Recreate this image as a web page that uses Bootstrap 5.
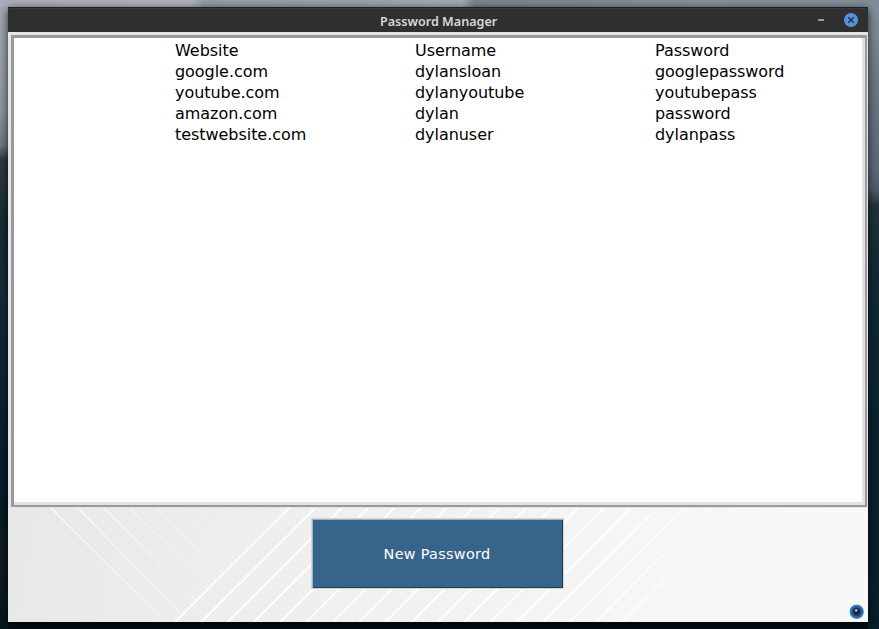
<!DOCTYPE html>
<html lang="en">
<head>
<meta charset="utf-8">
<meta name="viewport" content="width=device-width, initial-scale=1">
<title>Password Manager</title>
<link href="https://cdn.jsdelivr.net/npm/bootstrap@5.3.0/dist/css/bootstrap.min.css" rel="stylesheet">
<style>
body{height:629px;padding:7px 11px 7px 8px;font-family:"DejaVu Sans",sans-serif;color:#000;
 background:linear-gradient(to right,#a9adba 0,#b0b3c0 190px,#939ca7 205px,#9a9fac 350px,#a5aab7 462px,#76858e 475px,#84909b 700px,#7f8c97 100%) top/100% 7px no-repeat,
 linear-gradient(#a5a9b5 0,#9195a2 110px,#6f7a82 145px,#2b3c42 160px,#172b34 220px,#132a37 300px,#0b2030 420px,#081b28 500px,#0c1e20 560px,#07151d 629px) left/8px 100% no-repeat,
 linear-gradient(#84919c 0,#6c7984 80px,#596878 170px,#4e5c68 190px,#223438 205px,#142b35 260px,#0d2531 350px,#081e29 629px) right/11px 100% no-repeat,
 #030d13}
.app-window{box-shadow:0 2px 8px rgba(0,0,0,.75);border-radius:2px 2px 0 0}
.title-bar{height:25px;background:#2f2f2f;border-top:1px solid #1f1f1f;border-radius:2px 2px 0 0;box-shadow:inset 0 1px #3a3a3a;padding-right:10px}
.title-text{left:372px;top:5px;font:600 12.6px/17px "Noto Sans",sans-serif;color:#d8d8d8}
.min-mark{width:6px;height:2px;background:#9a9a9a;margin-right:20px}
.list-rim{height:476px;border:solid #e5e5e5;border-width:3px 1px 1px 3px}
.list-frame{border:solid #9a9a9a;border-width:3px 2px 2px 3px}
.list-area{border:solid #e2e2e2;border-width:0 3px 3px 0;padding:2px 0 0 161px}
.entry{display:grid;grid-template-columns:repeat(3,240px);width:680px;font-size:16px;line-height:21px;letter-spacing:-.05px;white-space:nowrap}
.entry span{width:0}
.footer-area{height:114px;background:linear-gradient(100deg,#e8e8e8,#efefef 35%,#f7f7f7 80%,#f8f8f8);padding-top:10px}
.new-btn{width:253px;height:71px;margin-right:2px;border-radius:0;background:#37648b!important;border:1px solid #d3d6d8!important;color:#fff!important;font-size:14.4px;letter-spacing:.3px;padding:2px 0 0;box-shadow:inset 1px 1px #9eb2c3,inset -1px -1px #1d3d59}
</style>
<script src="https://cdn.jsdelivr.net/npm/bootstrap@5.3.0/dist/js/bootstrap.bundle.min.js" defer></script>
</head>
<body class="m-0 overflow-hidden">
<main class="app-window h-100 d-flex flex-column">
 <header class="title-bar d-flex align-items-center justify-content-end position-relative flex-shrink-0">
  <div class="title-text position-absolute text-nowrap">Password Manager</div>
  <span class="min-mark"></span>
  <svg width="14" height="14" viewBox="0 0 14 14"><circle cx="7" cy="7" r="7" fill="#5294e2"/><path d="M4.2 4.2l5.6 5.6m0-5.6l-5.6 5.6" stroke="#2f343f" stroke-width="1.6"/></svg>
 </header>
 <section class="list-rim d-flex flex-shrink-0">
  <div class="list-frame d-flex flex-fill">
   <div class="list-area flex-fill bg-white">
    <div class="entry"><span>Website</span><span>Username</span><span>Password</span></div>
    <div class="entry"><span>google.com</span><span>dylansloan</span><span>googlepassword</span></div>
    <div class="entry"><span>youtube.com</span><span>dylanyoutube</span><span>youtubepass</span></div>
    <div class="entry"><span>amazon.com</span><span>dylan</span><span>password</span></div>
    <div class="entry"><span>testwebsite.com</span><span>dylanuser</span><span>dylanpass</span></div>
   </div>
  </div>
 </section>
 <footer class="footer-area position-relative d-flex justify-content-center align-items-start flex-shrink-0">
  <svg class="position-absolute top-0 start-0" width="860" height="114" viewBox="0 0 860 114">
   <defs>
    <linearGradient id="fadeDown" gradientUnits="userSpaceOnUse" x1="40" y1="0" x2="260" y2="0"><stop stop-color="#fff" stop-opacity=".75"/><stop offset=".5" stop-color="#fff" stop-opacity=".32"/><stop offset="1" stop-color="#fff" stop-opacity=".1"/></linearGradient>
    <linearGradient id="fadeRight" gradientUnits="userSpaceOnUse" x1="160" y1="0" x2="730" y2="0"><stop stop-color="#fff"/><stop offset=".7" stop-color="#fff" stop-opacity=".9"/><stop offset="1" stop-color="#fff" stop-opacity=".3"/></linearGradient>
    <radialGradient id="orb"><stop stop-color="#0e1a26"/><stop offset=".4" stop-color="#1b3047"/><stop offset=".7" stop-color="#2764a8"/><stop offset=".9" stop-color="#4182c8"/><stop offset="1" stop-color="#b5d0ec"/></radialGradient>
   </defs>
   <path fill="none" stroke="url(#fadeDown)" stroke-width="1.6" d="M43 0L157 114M70 0L173 106M96 0L188 92M122 0L202 79M149 0L215 66M175 0L228 53M202 0L242 40M228 0L255 27M254 0L268 14"/>
   <path fill="none" stroke="url(#fadeRight)" stroke-width="1.9" d="M281 0L167 114M307.3 0l-114 114M333.6 0l-114 114M359.9 0l-114 114M386.2 0l-114 114M412.5 0l-114 114M438.8 0l-114 114M465.1 0l-114 114M491.4 0l-114 114M517.7 0l-114 114M544 0l-114 114M570.3 0l-114 114M596.6 0l-114 114M622.9 0l-114 114M649.2 0l-114 114M675.5 0l-114 114M701.8 0l-114 114M728.1 0l-114 114"/>
   <circle cx="848.7" cy="103.7" r="7.4" fill="url(#orb)"/><rect x="847.2" y="101.5" width="2" height="2" fill="#e4eaf0"/>
  </svg>
  <button type="button" class="btn btn-primary new-btn position-relative">New Password</button>
 </footer>
</main>
</body>
</html>
